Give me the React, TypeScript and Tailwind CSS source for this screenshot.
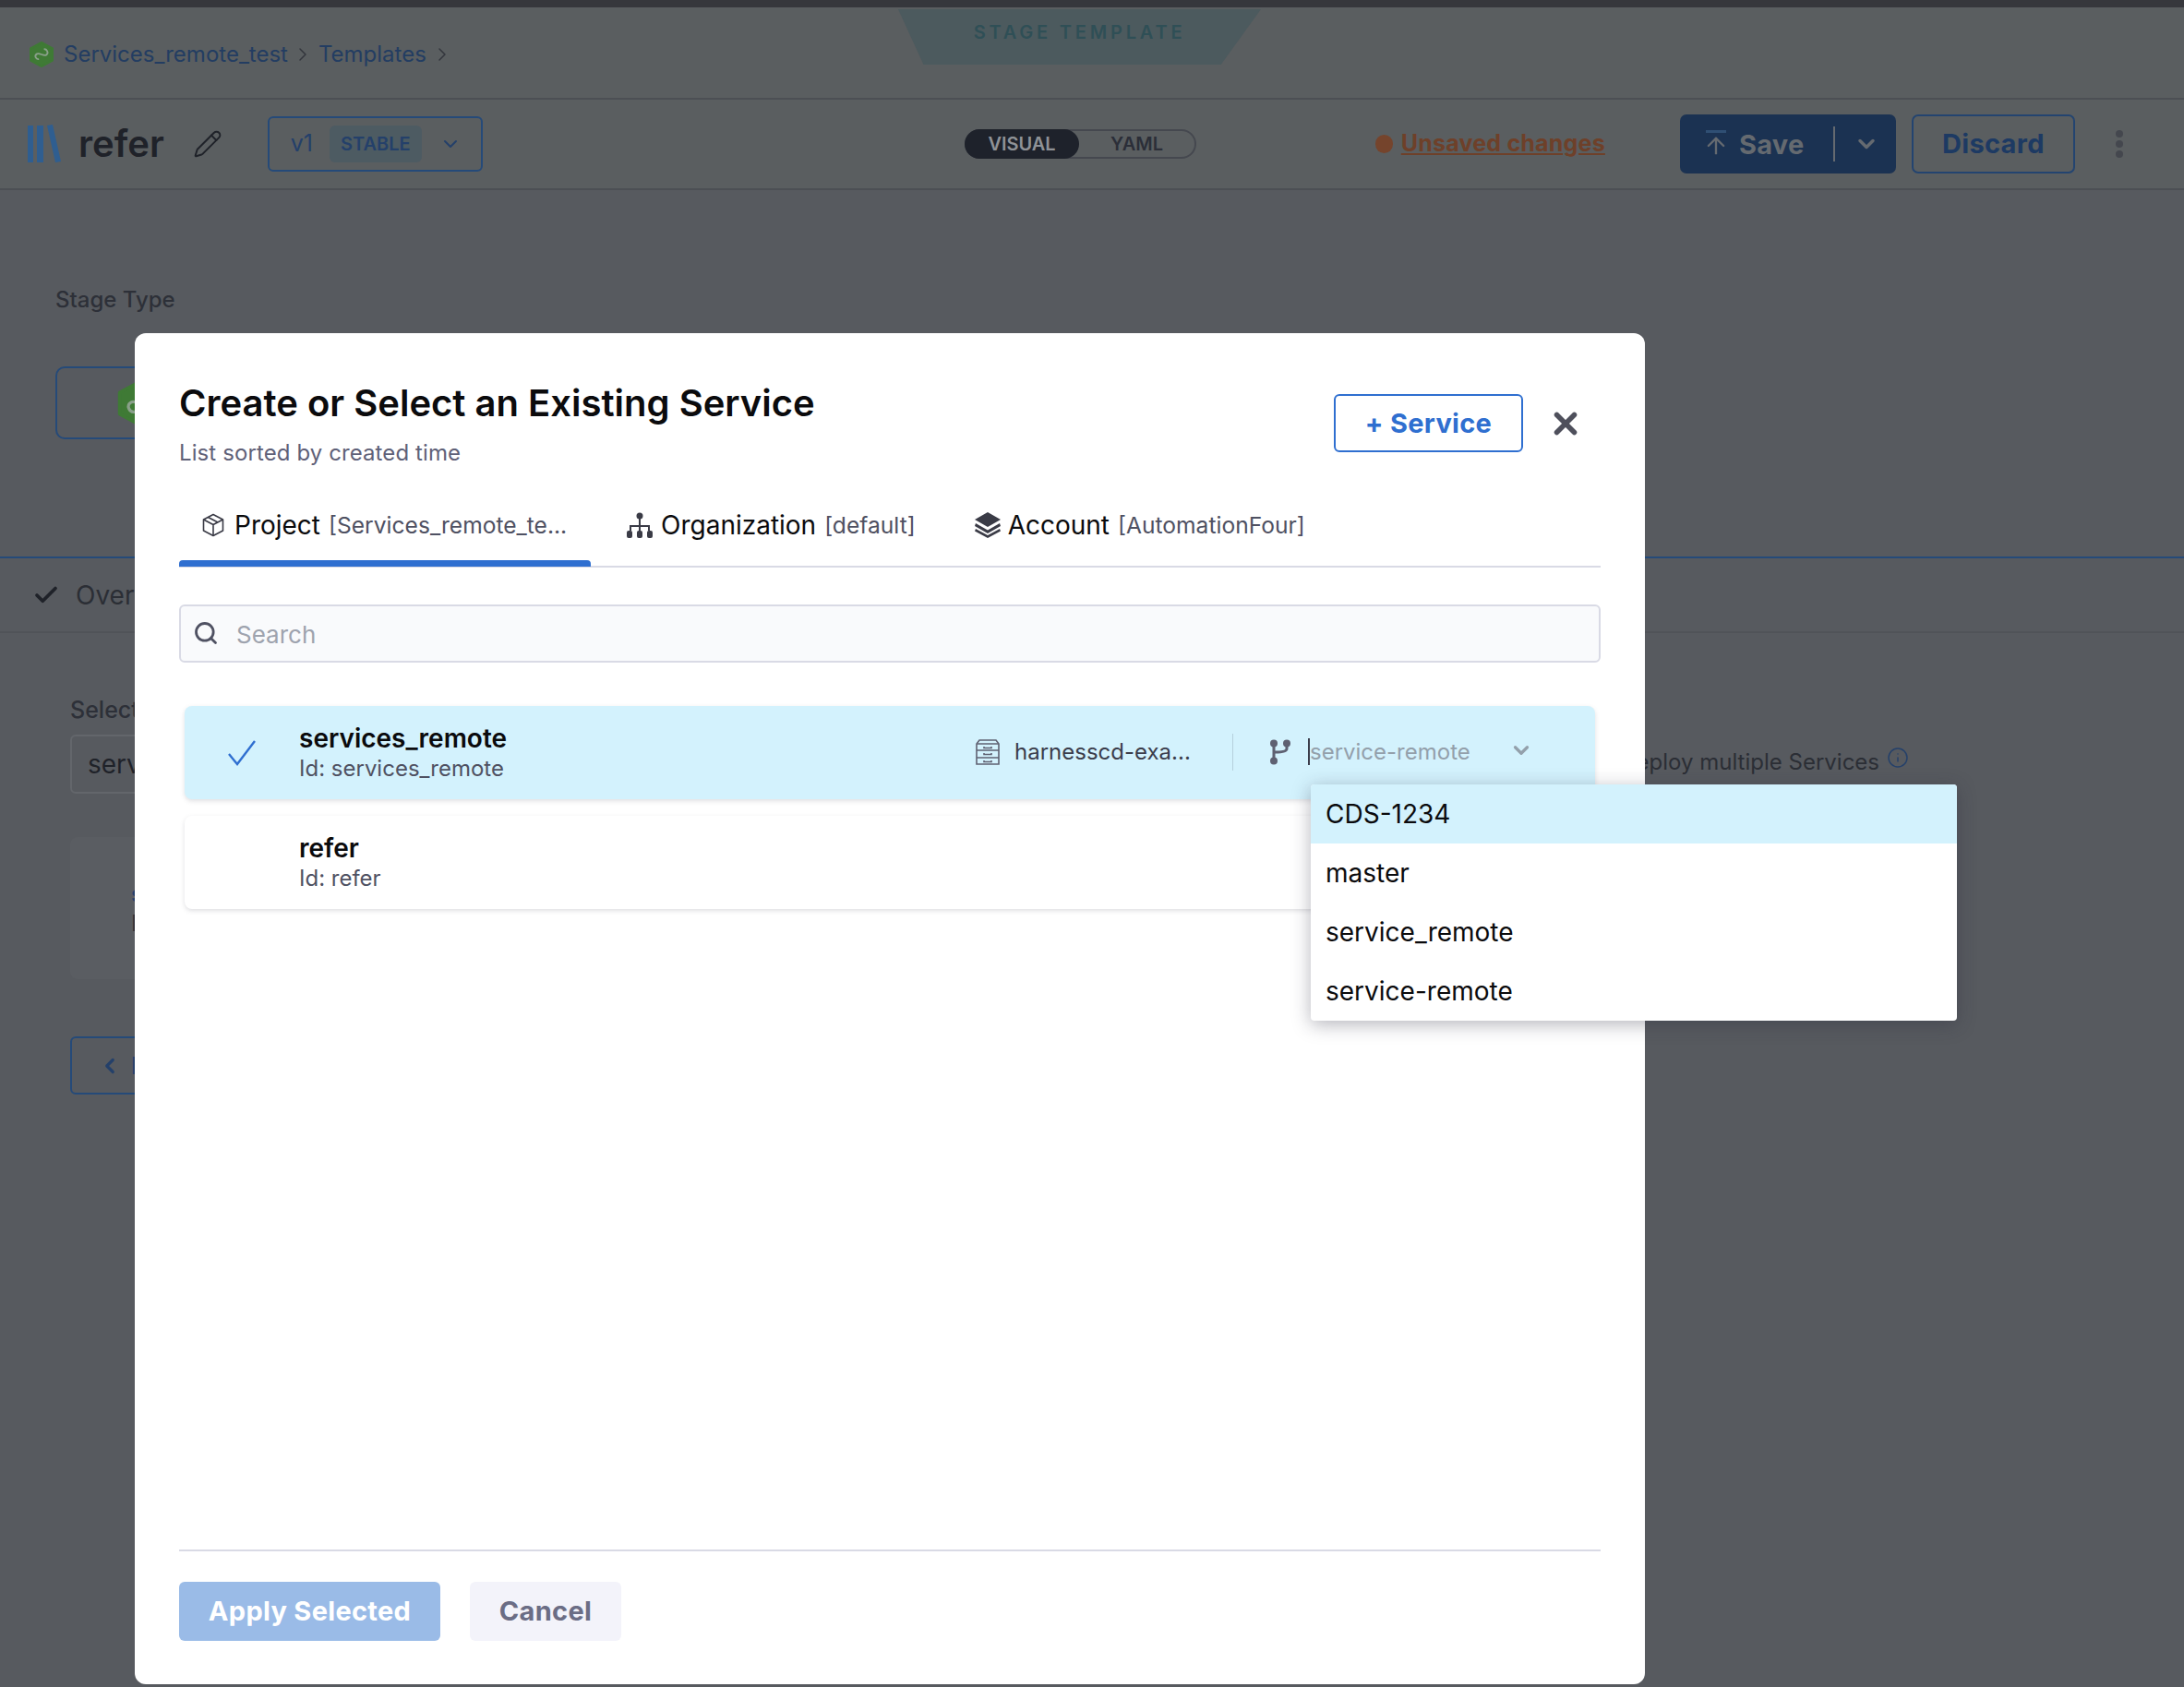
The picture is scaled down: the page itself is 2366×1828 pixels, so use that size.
import React from "react";
import { ChevronDown, ChevronRight, ChevronLeft, Check, Search, X, Info, Pencil, ArrowUp } from "lucide-react";

function Hex({ size, className }: { size: number; className?: string }) {
  return (
    <svg width={size} height={size} viewBox="0 0 28 28" className={className}>
      <path d="M14 1 L26 7.500 V20.500 L14 27 L2 20.500 V7.500 Z" fill="#3f7a35" stroke="#3f7a35" strokeWidth="2" strokeLinejoin="round" />
      <path d="M9 17c-3-1-3-6 1-6 3 0 5 6 8 6 4 0 4-6 1-6.500" fill="none" stroke="#8aa08a" strokeWidth="1.800" transform="rotate(-30 14 14)" />
    </svg>
  );
}

function LibraryIcon() {
  return (
    <svg width="36" height="42" viewBox="0 0 36 42" fill="#2f5e90">
      <rect x="0" y="1" width="6" height="40" />
      <rect x="10" y="1" width="7" height="40" />
      <path d="M21 1 L27 0 L36 40 L30 41 Z" />
    </svg>
  );
}

function ProjectIcon() {
  return (
    <svg width="24" height="26" viewBox="0 0 24 26" fill="none" stroke="#3a3b46" strokeWidth="1.600" strokeLinejoin="round">
      <path d="M12 1.500 L22.500 7 V19 L12 24.500 L1.500 19 V7 Z" />
      <path d="M1.500 7 L12 12.500 L22.500 7 M12 12.500 V24.500 M6.500 4.500 L17 10" />
    </svg>
  );
}

function OrgIcon() {
  return (
    <svg width="28" height="28" viewBox="0 0 28 28" fill="#3a3b46">
      <circle cx="14" cy="4" r="3.500" />
      <rect x="13" y="6" width="2" height="8" />
      <path d="M3 20 V14 H25 V20 H23 V16 H15 V20 H13 V16 H5 V20 Z" />
      <rect x="0" y="20" width="6" height="8" rx="2" />
      <rect x="11" y="20" width="6" height="8" rx="2" />
      <rect x="22" y="20" width="6" height="8" rx="2" />
    </svg>
  );
}

function StackIcon() {
  return (
    <svg width="28" height="28" viewBox="0 0 28 28" fill="#3a3b46">
      <path d="M14 0 L28 8 L14 16 L0 8 Z" />
      <path d="M1 12 L14 19.500 L27 12 L28 15 L14 23 L0 15 Z" />
      <path d="M1 18 L14 25 L27 18 L28 20.500 L14 28 L0 20.500 Z" />
    </svg>
  );
}

function RepoIcon() {
  return (
    <svg width="26" height="28" viewBox="0 0 26 28" fill="none" stroke="#5f6172" strokeWidth="1.600">
      <path d="M4 1 H22 L25 5 V27 H1 V5 Z" />
      <path d="M1 5 H25 M1 12 H25 M1 20 H25" />
      <path d="M9 8 V9.500 H17 V8 M9 15 V16.500 H17 V15 M9 23 V24.500 H17 V23" />
    </svg>
  );
}

function BranchIcon() {
  return (
    <svg width="24" height="28" viewBox="0 0 24 28" fill="#5f6172">
      <circle cx="5" cy="4.500" r="4" />
      <circle cx="19" cy="4.500" r="4" />
      <circle cx="5" cy="23.500" r="4" />
      <rect x="3.500" y="6" width="3" height="16" />
      <path d="M17.500 7 H20.500 V10 C20.500 14 16 15.500 6 15.500 V12.500 C14 12.500 17.500 12 17.500 10 Z" />
    </svg>
  );
}

function ThinCheck() {
  return (
    <svg width="30" height="28" viewBox="0 0 30 28" fill="none" stroke="#2f6fd0" strokeWidth="2.400">
      <path d="M1 15 L10 26 L29 1" />
    </svg>
  );
}

function Tab({ icon, label, scope, gap }: { icon: React.ReactNode; label: string; scope: string; gap: string }) {
  return (
    <div className="flex items-center h-[46px]">
      {icon}
      <span className={`text-[28px] text-[#0b0b0d] leading-none ${gap}`}>{label}</span>
      <span className="text-[24.600px] text-[#4f5162] ml-[9px] leading-none">{scope}</span>
    </div>
  );
}

function ServiceRow({ name, selected, children }: { name: string; selected?: boolean; children?: React.ReactNode }) {
  return (
    <div className={`flex items-center h-[101px] rounded-[8px] shadow-[0_2px_5px_rgba(96,97,112,0.2)] ${selected ? "bg-[#d3f2fd]" : "bg-white"}`}>
      <div className="w-[124px] pl-[47px] shrink-0">
        {selected && <ThinCheck />}
      </div>
      <div className="flex flex-col pt-[2px]">
        <span className="text-[28px] leading-[32px] font-semibold text-[#0b0b0d]">{name}</span>
        <span className="text-[24px] leading-[34px] text-[#4f5162]">Id: {name}</span>
      </div>
      {children}
    </div>
  );
}

export default function App() {
  return (
    <div className="relative w-[2366px] h-[1828px] overflow-hidden bg-[#575a5f] font-[Inter,sans-serif]">
      {/* page behind the dialog */}
      <div className="h-[8px] bg-[#36373c]" />
      <div className="flex items-center h-[100px] pl-[31px] pt-[4px] bg-[#5a5e60] border-b-2 border-[#4c4f54] text-[24px] text-[#233d62]">
        <Hex size={28} />
        <span className="ml-[10px]">Services_remote_test</span>
        <ChevronRight size={24} strokeWidth={1.500} className="ml-[4px] text-[#33363d]" />
        <span className="ml-[5px]">Templates</span>
        <ChevronRight size={24} strokeWidth={1.500} className="ml-[5px] text-[#33363d]" />
      </div>
      <div className="absolute left-[973px] top-[10px] w-[393px] h-[60px] bg-[#4c5a5e] [clip-path:polygon(0_0,100%_0,89%_100%,7%_100%)] flex items-center justify-center pb-[10px]">
        <span className="text-[20px] font-semibold tracking-[3.800px] text-[#2f4f56]">STAGE TEMPLATE</span>
      </div>
      <div className="flex items-center h-[98px] bg-[#5a5e60] border-b-2 border-[#4c4f54]">
        <div className="ml-[30px]"><LibraryIcon /></div>
        <span className="ml-[19px] text-[40px] font-semibold text-[#1f2229] leading-none">refer</span>
        <Pencil size={32} strokeWidth={1.500} className="ml-[31px] text-[#1f2229]" />
        <div className="ml-[49px] w-[233px] h-[60px] border-2 border-[#254a79] rounded-[6px] flex items-center pl-[23px]">
          <span className="text-[25px] text-[#24406a] w-[42px]">v1</span>
          <span className="w-[100px] h-[40px] bg-[#4d5b62] rounded-[6px] flex items-center justify-center text-[20px] font-semibold text-[#24406a]">STABLE</span>
          <ChevronDown size={24} strokeWidth={2} className="ml-[19px] text-[#24406a]" />
        </div>
        <div className="ml-[522px] w-[251px] h-[32px] border-2 border-[#45484f] rounded-full flex items-center">
          <span className="w-[125px] h-[32px] -ml-[2px] rounded-full bg-[#1e222b] flex items-center justify-center text-[20px] font-semibold text-[#8f9297]">VISUAL</span>
          <span className="w-[125px] text-center text-[20px] font-semibold text-[#2b2e38]">YAML</span>
        </div>
        <span className="ml-[194px] w-[19px] h-[20px] rounded-full bg-[#75442c]" />
        <span className="ml-[9px] text-[25px] font-bold tracking-[0.200px] text-[#6e4029] underline">Unsaved changes</span>
        <div className="ml-[81px] w-[234px] h-[64px] bg-[#1b3252] rounded-[7px] flex items-center text-[#656a70]">
          <div className="ml-[28px] flex flex-col items-center w-[22px]">
            <span className="w-[22px] h-[3px] bg-[#2f4f74]" />
            <ArrowUp size={28} strokeWidth={2} />
          </div>
          <span className="ml-[14px] w-[102px] text-[29px] font-bold tracking-[0.300px] leading-none">Save</span>
          <span className="w-[2px] h-[38px] bg-[#656a70]" />
          <ChevronDown size={28} strokeWidth={3} className="ml-[20px]" />
        </div>
        <div className="ml-[17px] w-[177px] h-[64px] border-2 border-[#234470] rounded-[7px] flex items-center justify-center text-[29px] font-bold tracking-[0.300px] text-[#1d3a63]">Discard</div>
        <div className="ml-[44px] flex flex-col gap-[3px]">
          <span className="w-[8px] h-[8px] rounded-full bg-[#44474e]" />
          <span className="w-[8px] h-[8px] rounded-full bg-[#44474e]" />
          <span className="w-[8px] h-[8px] rounded-full bg-[#44474e]" />
        </div>
      </div>

      <div className="pl-[60px] pt-[105px] h-[399px] border-b-2 border-[#254a79]">
        <div className="text-[24px] font-medium text-[#2d3038] leading-[28px]">Stage Type</div>
        <div className="mt-[58px] w-[300px] h-[79px] border-2 border-[#254a79] rounded-[10px] flex items-center pl-[64px]">
          <Hex size={50} />
        </div>
      </div>
      <div className="flex items-center h-[81px] pl-[35px] border-b-2 border-[#505358]">
        <Check size={30} strokeWidth={3} className="text-[#1f2229]" />
        <span className="ml-[17px] text-[28px] text-[#2b2e35]">Overview</span>
      </div>

      <div className="flex">
        <div className="pl-[76px] pt-[69px]">
          <div className="text-[25px] font-medium text-[#2d3038] leading-[28px]">Select Service</div>
          <div className="mt-[13px] w-[300px] h-[64px] border-2 border-[#63666b] rounded-[6px] flex items-center pl-[17px] text-[28px] text-[#1f2229]">services_remote</div>
          <div className="mt-[47px] w-[400px] h-[154px] bg-[#5a5d62] rounded-[8px] pl-[66px] pt-[46px] text-[24px] leading-[32px]">
            <div className="text-[#24406a] font-semibold">services</div>
            <div className="text-[#2d3038]">Id</div>
          </div>
          <div className="mt-[62px] w-[200px] h-[63px] border-2 border-[#254a79] rounded-[6px] flex items-center pl-[28px] text-[#24406a]">
            <ChevronLeft size={26} strokeWidth={3} />
            <span className="ml-[10px] text-[26px] font-semibold">Previous</span>
          </div>
        </div>
        <div className="ml-[994px] pt-[124px] flex items-start">
          <span className="w-[566px] text-right text-[24px] leading-[32px] text-[#2b2e35] whitespace-nowrap">Deploy multiple Services</span>
          <Info size={24} strokeWidth={1.500} className="ml-[8px] -mt-[1px] text-[#24406a]" />
        </div>
      </div>

      {/* dialog */}
      <div className="absolute left-[146px] top-[361px] w-[1636px] h-[1464px] bg-white rounded-[12px] px-[48px] flex flex-col">
        <div className="flex h-[185px] relative">
          <div className="pt-[52px]">
            <h1 className="text-[40px] leading-[48px] font-semibold text-[#0b0b0d]">Create or Select an Existing Service</h1>
            <p className="mt-[14px] text-[24px] leading-[32px] tracking-[0.100px] text-[#5f6178]">List sorted by created time</p>
          </div>
          <div className="ml-auto mt-[66px] mr-[84px] w-[205px] h-[63px] border-2 border-[#2f6fd0] rounded-[6px] flex items-center justify-center text-[29px] font-bold tracking-[0.300px] text-[#2f6fd0]">+ Service</div>
          <div className="absolute right-[19px] top-[79px]"><X size={38} strokeWidth={3.500} className="text-[#4f505c]" /></div>
        </div>
        <div className="flex h-[69px] border-b-2 border-[#d9dae5] relative">
          <div className="w-[446px] pl-[25px] relative">
            <Tab icon={<ProjectIcon />} label="Project" scope="[Services_remote_te..." gap="ml-[11px]" />
            <div className="absolute left-0 right-0 -bottom-[1px] h-[7px] bg-[#2f6fd0] rounded-t-[4px]" />
          </div>
          <div className="ml-[39px]"><Tab icon={<OrgIcon />} label="Organization" scope="[default]" gap="ml-[9px]" /></div>
          <div className="ml-[64px]"><Tab icon={<StackIcon />} label="Account" scope="[AutomationFour]" gap="ml-[8px]" /></div>
        </div>
        <div className="mt-[40px] h-[63px] border-2 border-[#d9dae5] rounded-[6px] bg-[#f9fafc] flex items-center pl-[13px]">
          <Search size={28} strokeWidth={2.400} className="text-[#4f5162] -mt-[2px]" />
          <span className="ml-[19px] text-[26px] text-[#9ea3ae] pt-[2px]">Search</span>
        </div>
        <div className="mt-[47px] mx-[6px] flex flex-col gap-[18px]">
          <ServiceRow name="services_remote" selected>
            <div className="ml-auto flex items-center -mt-[2px]">
              <RepoIcon />
              <span className="ml-[16px] w-[189px] text-[24px] text-[#3b3d4b] whitespace-nowrap">harnesscd-exa...</span>
              <span className="ml-[47px] w-px h-[40px] bg-[#b6d0dc]" />
              <div className="ml-[39px]"><BranchIcon /></div>
              <span className="ml-[18px] w-[2px] h-[29px] bg-[#3b3d4b]" />
              <span className="w-[216px] text-[24px] text-[#93a0ab] whitespace-nowrap">service-remote</span>
              <ChevronDown size={26} strokeWidth={3} className="text-[#93a0ab] mr-[67px] -mt-[3px]" />
            </div>
          </ServiceRow>
          <ServiceRow name="refer" />
        </div>
        <div className="mt-auto h-[146px] border-t-2 border-[#d9dae5] pt-[33px] flex gap-[32px]">
          <div className="w-[283px] h-[64px] rounded-[6px] bg-[#9abbe7] flex items-center justify-center text-[29px] font-bold tracking-[0.300px] text-white">Apply Selected</div>
          <div className="w-[164px] h-[64px] rounded-[6px] bg-[#f3f3fa] flex items-center justify-center text-[29px] font-bold tracking-[0.300px] text-[#6b6d85]">Cancel</div>
        </div>
      </div>

      {/* branch menu */}
      <div className="absolute left-[1420px] top-[850px] w-[700px] h-[256px] bg-white rounded-[4px] overflow-hidden shadow-[0_4px_20px_rgba(40,41,61,0.35)] text-[28px] text-[#0b0b0d]">
        <div className="h-[64px] bg-[#d3f2fd] flex items-center pl-[16px]">CDS-1234</div>
        <div className="h-[64px] flex items-center pl-[16px]">master</div>
        <div className="h-[64px] flex items-center pl-[16px]">service_remote</div>
        <div className="h-[64px] flex items-center pl-[16px]">service-remote</div>
      </div>
    </div>
  );
}
